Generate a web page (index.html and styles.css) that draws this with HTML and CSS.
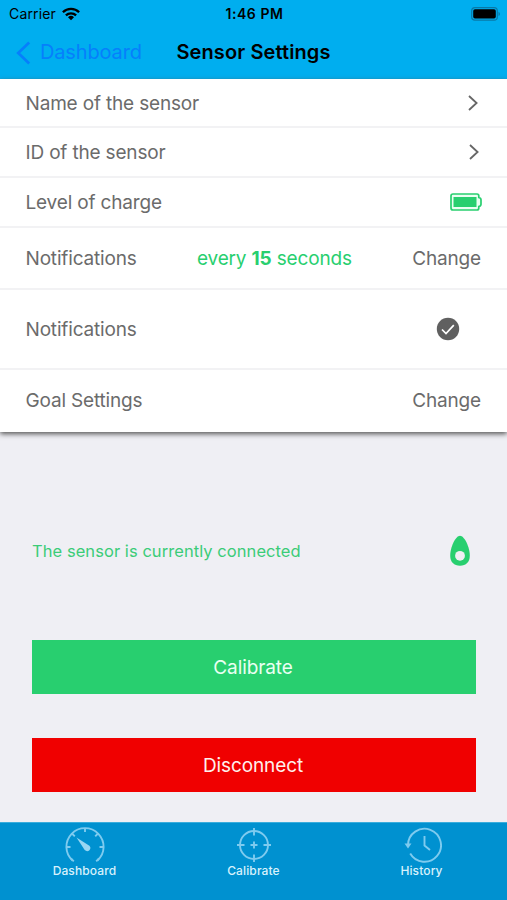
FILE: index.html
```html
<!DOCTYPE html>
<html lang="en">
<head>
<meta charset="utf-8">
<title>Sensor Settings</title>
<link rel="stylesheet" href="styles.css">
</head>
<body>
<div class="app">
  <header class="header">
    <div class="status">
      <div class="carrier"><span>Carrier</span>
        <svg width="18" height="14" viewBox="0 0 18 14"><g fill="none" stroke="#000" stroke-width="2.3"><path d="M.9 5.200a11.500 11.500 0 0 1 16.200 0"/><path d="M3.900 8.400a7.200 7.200 0 0 1 10.200 0"/></g><path d="M9 13.300 6 10.300a4.300 4.300 0 0 1 6 0z"/></svg>
      </div>
      <span class="time">1:46 PM</span>
      <svg class="power" width="30" height="14" viewBox="0 0 30 14"><rect x=".7" y=".7" width="25.600" height="12.400" rx="3.200" fill="none" stroke="#0879a8" stroke-width="1.200"/><rect x="2.200" y="2.200" width="22.600" height="9.400" rx="1.800"/><path d="M27.500 4.700c2 .8 2 3.600 0 4.400z" fill="#0879a8"/></svg>
    </div>
    <nav class="navbar">
      <a class="back"><svg width="15" height="24" viewBox="0 0 15 24"><path d="M13.200 1.500 2.200 12l11 10.500" fill="none" stroke="#067ffc" stroke-width="2.700"/></svg><span>Dashboard</span></a>
      <h1 class="title">Sensor Settings</h1>
      <span></span>
    </nav>
  </header>
  <main class="main">
    <section class="list">
      <div class="row row-name"><span>Name of the sensor</span><svg width="12" height="18" viewBox="0 0 12 18"><path d="m2 2 7.600 7L2 16" fill="none" stroke="#666" stroke-width="1.800"/></svg></div>
      <div class="row row-id"><span>ID of the sensor</span><svg width="12" height="18" viewBox="0 0 12 18"><path d="m2 2 7.600 7L2 16" fill="none" stroke="#666" stroke-width="1.800"/></svg></div>
      <div class="row row-charge"><span>Level of charge</span><svg width="34" height="20" viewBox="0 0 34 20"><path d="M4 2h24q1.800 0 1.800 2v1.500q2.200.5 2.200 2.300v4.400q0 1.800-2.200 2.300V16q0 2-1.800 2H4q-2 0-2-2V4q0-2 2-2z" fill="#eafff2" stroke="#28cf6f" stroke-width="1.700"/><path d="M4.500 5H27.500v10H4.500z" fill="#28cf6f"/></svg></div>
      <div class="row row-period"><span>Notifications</span><span class="period">every <b>15</b> seconds</span><span class="change">Change</span></div>
      <div class="row row-check"><span>Notifications</span><svg width="24" height="24" viewBox="0 0 24 24"><circle cx="12" cy="12" r="11.200" fill="#606060"/><path d="m6 12.500 4 4 7.800-8.300" fill="none" stroke="#fff" stroke-width="1.700"/></svg></div>
      <div class="row row-goal"><span>Goal Settings</span><span class="change">Change</span></div>
    </section>
    <section class="connection"><span>The sensor is currently connected</span><svg width="22" height="32" viewBox="0 0 22 32"><path fill-rule="evenodd" d="M11 .8c-4.400 0-9.800 11.400-9.800 20 0 6.300 3.800 10 9.800 10s9.800-3.700 9.800-10C20.800 12.200 15.400.8 11 .8z" fill="#28cf6f"/><circle cx="11" cy="20.800" r="4.900" fill="#efeff4"/></svg></section>
    <div class="actions"><button class="button calibrate">Calibrate</button><button class="button disconnect">Disconnect</button></div>
  </main>
  <footer class="tabs">
    <a class="tab"><svg width="42" height="38" viewBox="0 0 42 38"><g fill="none" stroke="#7ecbef" stroke-width="1.900"><path d="M8.500 34.500A18.600 18.600 0 1 1 33.500 34.500"/><path d="M21 2v4M2.500 21h4M35.500 21h4M8 7.500l2.800 2.800M34 7.500l-2.800 2.800M7 32.500l2.800 2.800M35 32.500l-2.800 2.800"/></g><path d="M12.500 11.500 25.400 19.800c3 3.200-1.500 7.400-4.700 4.300z" fill="#98d7f3"/></svg><span>Dashboard</span></a>
    <a class="tab"><svg width="36" height="38" viewBox="0 0 36 38"><g fill="none" stroke="#7ecbef" stroke-width="1.900"><circle cx="18" cy="19" r="14"/><path d="M18 2v7.500M18 28.500V36M1 19h7.500M27.500 19H35M14.500 19h7M18 15.500v7"/></g></svg><span>Calibrate</span></a>
    <a class="tab tab-history"><svg width="38" height="38" viewBox="0 0 38 38"><g fill="none" stroke="#7ecbef" stroke-width="1.900"><path d="M4 19a16.500 16.500 0 1 1 2.200 8.500"/><path d="M20.500 10v9.500l5.500 4.500"/></g><path d="M.5 17.500h7L4 22.500z" fill="#7ecbef"/></svg><span>History</span></a>
  </footer>
</div>
</body>
</html>
```
FILE: styles.css
```css
* { box-sizing: border-box; }
body { margin: 0; font-family: Inter, "Liberation Sans", sans-serif; }
svg { display: block; flex: none; }
.app { width: 507px; height: 900px; display: flex; flex-direction: column; background: #efeff4; overflow: hidden; }
.header { height: 79px; background: #00aeef; }
.status { height: 27px; display: grid; grid-template-columns: 1fr auto 1fr; align-items: center; padding: 0 6px 0 9px; font-size: 14px; }
.carrier { display: flex; gap: 6px; align-items: center; letter-spacing: .15px; }
.time { font-weight: 600; letter-spacing: .55px; margin-right: 1px; }
.power { justify-self: end; }
.navbar { height: 51px; display: grid; grid-template-columns: 1fr auto 1fr; align-items: center; padding: 0 16px; }
.back { display: flex; align-items: center; gap: 9px; color: #067ffc; font-size: 20px; letter-spacing: -.15px; }
.title { margin: 0; font-size: 20px; font-weight: 600; letter-spacing: .1px; }
.back span, .title { padding-bottom: 1px; }
.main { height: 743px; }
.list { background: #fff; color: #6b6b6b; font-size: 19px; letter-spacing: -.17px; box-shadow: 0 2px 5px #555; position: relative; height: 353px; }
.row { height: 49px; border-bottom: 2px solid #f2f2f4; padding: 0 26px 0 25.5px; display: flex; align-items: center; justify-content: space-between; }
.row-name { padding: 1px 28px 0 25.5px; }
.row-id { padding-right: 27px; }
.row-id, .row-charge { height: 50px; }
.row-charge { padding-right: 24px; }
.row-period { height: 62px; display: grid; grid-template-columns: 171.5px auto 1fr; }
.change { text-align: right; }
.row-check { height: 80px; padding-right: 47px; }
.row-goal { height: 62px; border: 0; padding-bottom: 2px; }
.period { color: #28cf6f; }
.connection { height: 32px; margin: 103px 36px 0 32px; display: flex; align-items: center; justify-content: space-between; color: #3bcc78; font-size: 16.5px; letter-spacing: .06px; }
.actions { display: grid; gap: 44px; margin: 73px 31px 0 32px; }
.button { height: 54px; border: 0; padding: 0 2px 0 0; font: 19px Inter, sans-serif; letter-spacing: -.1px; color: #e9fff2; background: #28cf6f; }
.disconnect { background: #f00000; color: #fff0ec; }
.tabs { height: 78px; background: #0091d0; border-top: 1px solid #39addd; display: grid; grid-template-columns: repeat(3, 1fr); padding-top: 3px; }
.tab { display: flex; flex-direction: column; align-items: center; color: #d8f1fc; font-size: 12px; font-weight: 500; letter-spacing: .12px; }
.tab span { line-height: 14px; }
.tab-history span { margin-right: 2px; }
```
